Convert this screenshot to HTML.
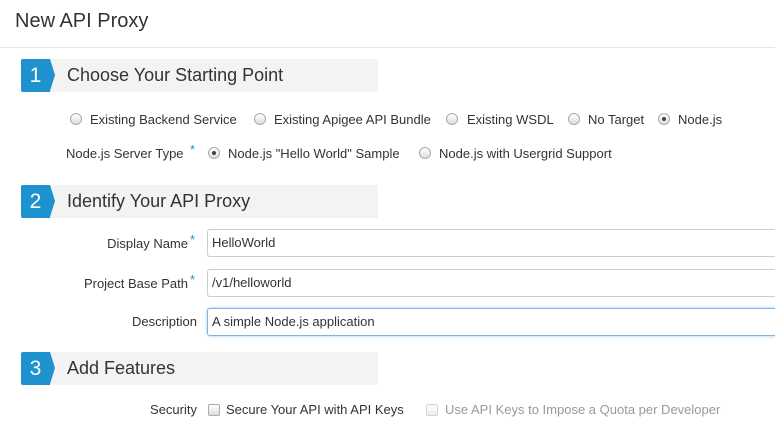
<!DOCTYPE html>
<html><head><style>
body{margin:0;width:775px;height:430px;background:#fff;font-family:"Liberation Sans",sans-serif;color:#333;position:relative;overflow:hidden}
.a{position:absolute;white-space:nowrap}
.hdr{left:15px;top:10px;font-size:20px;color:#333}
.line{left:0;top:47px;width:775px;height:1px;background:#e6e6e6}
.bar{position:absolute;left:21px;width:357px;height:33px;background:#f3f3f3}
.num{position:absolute;left:0;top:0;width:29px;height:33px;background:#1e91cf;color:#fff;font-size:21px;line-height:33px;text-align:center;border-radius:2px 0 0 2px}
.num:after{content:"";position:absolute;left:29px;top:0;border-left:5px solid #1e91cf;border-top:16.5px solid transparent;border-bottom:16.5px solid transparent}
.tt{position:absolute;left:46px;top:0;line-height:33px;font-size:18px;color:#333}
.f{font-size:13px}
.r{position:absolute;width:10px;height:10px;border:1px solid #aaa;border-radius:50%;background:linear-gradient(#fff,#ddd)}
.r.on:after{content:"";position:absolute;left:3px;top:3px;width:4px;height:4px;border-radius:50%;background:#444}
.c{position:absolute;width:10px;height:10px;border:1px solid #aaa;border-radius:2px;background:linear-gradient(#fff,#ddd)}
.in{position:absolute;left:207px;width:580px;height:26px;border:1px solid #ccc;border-radius:3px;font-size:13px;line-height:26px;padding-left:4px;box-sizing:content-box}
.st{color:#1e91cf;font-size:13px;position:absolute}
.lb{text-align:right}
</style></head><body>
<div class="a hdr">New API Proxy</div>
<div class="a line"></div>

<div class="bar" style="top:59px"><div class="num">1</div><div class="tt">Choose Your Starting Point</div></div>
<div class="r" style="left:70px;top:113px"></div><div class="a f" style="left:90px;top:112px">Existing Backend Service</div>
<div class="r" style="left:254px;top:113px"></div><div class="a f" style="left:274px;top:112px">Existing Apigee API Bundle</div>
<div class="r" style="left:446px;top:113px"></div><div class="a f" style="left:467px;top:112px">Existing WSDL</div>
<div class="r" style="left:568px;top:113px"></div><div class="a f" style="left:588px;top:112px">No Target</div>
<div class="r on" style="left:658px;top:113px"></div><div class="a f" style="left:678px;top:112px">Node.js</div>

<div class="a f" style="left:66px;top:146px">Node.js Server Type</div><span class="st" style="left:190px;top:142px">*</span>
<div class="r on" style="left:208px;top:147px"></div><div class="a f" style="left:228px;top:146px">Node.js "Hello World" Sample</div>
<div class="r" style="left:419px;top:147px"></div><div class="a f" style="left:439px;top:146px">Node.js with Usergrid Support</div>

<div class="bar" style="top:185px"><div class="num">2</div><div class="tt">Identify Your API Proxy</div></div>
<div class="a f lb" style="top:236px;right:587px">Display Name</div><span class="st" style="left:190px;top:232px">*</span>
<div class="in" style="top:229px">HelloWorld</div>
<div class="a f lb" style="top:276px;right:587px">Project Base Path</div><span class="st" style="left:190px;top:272px">*</span>
<div class="in" style="top:269px">/v1/helloworld</div>
<div class="a f lb" style="top:314px;right:578px">Description</div>
<div class="in" style="top:308px;border-color:#7fb4e6;box-shadow:0 0 3px #9cc7ef">A simple Node.js application</div>

<div class="bar" style="top:352px"><div class="num">3</div><div class="tt">Add Features</div></div>
<div class="a f lb" style="top:402px;right:578px">Security</div>
<div class="c" style="left:208px;top:404px"></div><div class="a f" style="left:226px;top:402px">Secure Your API with API Keys</div>
<div class="c" style="left:426px;top:404px;opacity:.5"></div><div class="a f" style="left:445px;top:402px;color:#999">Use API Keys to Impose a Quota per Developer</div>
</body></html>
